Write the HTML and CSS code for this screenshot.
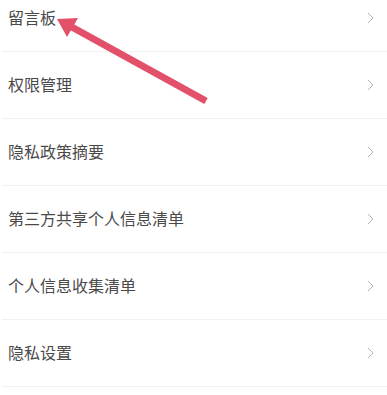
FILE: index.html
```html
<!DOCTYPE html>
<html lang="zh-CN">
<head>
<meta charset="utf-8">
<link rel="stylesheet" href="styles.css">
</head>
<body>
<div class="page">
  <ul class="menu">
    <li class="row"><span class="label">留言板</span><svg class="chev" viewBox="0 0 7 12"><path d="M0.8 0.8 L6 6 L0.8 11.2"/></svg></li>
    <li class="row"><span class="label">权限管理</span><svg class="chev" viewBox="0 0 7 12"><path d="M0.8 0.8 L6 6 L0.8 11.2"/></svg></li>
    <li class="row"><span class="label">隐私政策摘要</span><svg class="chev" viewBox="0 0 7 12"><path d="M0.8 0.8 L6 6 L0.8 11.2"/></svg></li>
    <li class="row"><span class="label">第三方共享个人信息清单</span><svg class="chev" viewBox="0 0 7 12"><path d="M0.8 0.8 L6 6 L0.8 11.2"/></svg></li>
    <li class="row"><span class="label">个人信息收集清单</span><svg class="chev" viewBox="0 0 7 12"><path d="M0.8 0.8 L6 6 L0.8 11.2"/></svg></li>
    <li class="row"><span class="label">隐私设置</span><svg class="chev" viewBox="0 0 7 12"><path d="M0.8 0.8 L6 6 L0.8 11.2"/></svg></li>
  </ul>
  <svg class="arrow" viewBox="0 0 387 395" width="387" height="395">
    <line x1="70" y1="26" x2="206" y2="101" stroke="#e2506a" stroke-width="7"/>
    <polygon points="57,19 78,18 67,37" fill="#e2506a"/>
  </svg>
</div>
</body>
</html>
```

FILE: styles.css
```css
html, body {
  margin: 0;
  padding: 0;
  background: #ffffff;
}
body {
  font-family: "Noto Sans CJK SC", "Noto Sans", sans-serif;
  width: 387px;
  height: 395px;
  overflow: hidden;
}
.page {
  position: relative;
  width: 387px;
  height: 395px;
  overflow: hidden;
}
.menu {
  list-style: none;
  margin: -15px 0 0 0;
  padding: 0;
}
.row {
  height: 66px;
  display: flex;
  align-items: center;
  justify-content: space-between;
  padding: 0 13px 0 6px;
  margin-left: 2px;
  border-bottom: 1px solid #f1f1f1;
}
.label {
  font-size: 16px;
  line-height: 20px;
  color: #4a4a4a;
  margin-top: -2px;
}
.chev {
  width: 7px;
  height: 12px;
  fill: none;
  stroke: #b4b4b4;
  stroke-width: 1;
}
.arrow {
  position: absolute;
  left: 0;
  top: 0;
  pointer-events: none;
}
```
